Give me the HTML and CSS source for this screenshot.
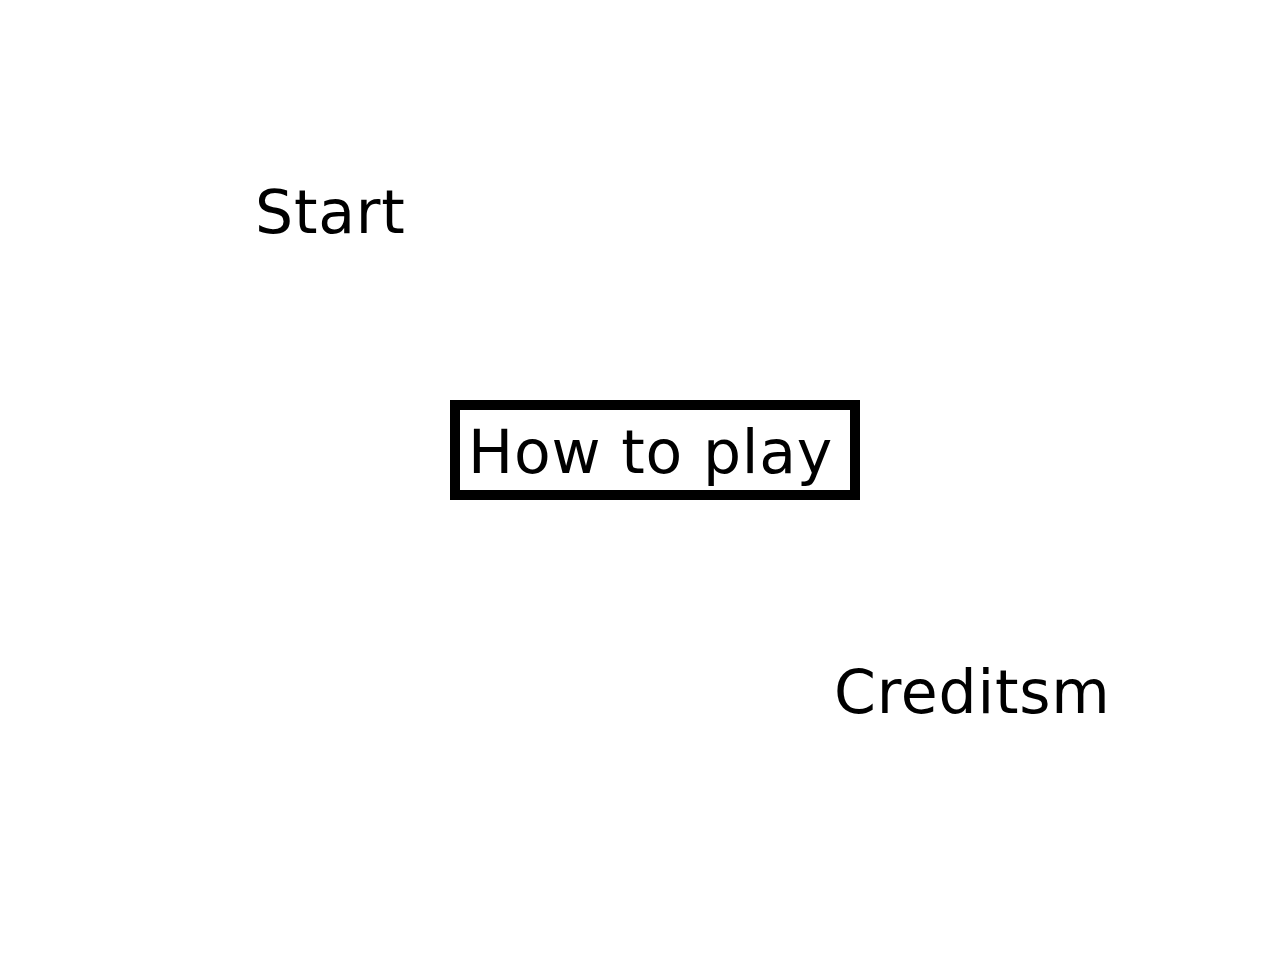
FILE: index.html
```html
<!DOCTYPE html>
<html>
<head>
<meta charset="utf-8">
<link rel="stylesheet" href="styles.css">
</head>
<body>
<main class="menu">
  <div class="item item-start">Start</div>
  <div class="item item-how"><span class="boxed">How to play</span></div>
  <div class="item item-credits">Creditsm</div>
</main>
</body>
</html>
```
FILE: styles.css
```css
html, body {
  margin: 0;
  padding: 0;
  background: #ffffff;
}
body {
  width: 1280px;
  height: 960px;
  overflow: hidden;
  font-family: "DejaVu Sans", sans-serif;
  font-size: 60px;
  letter-spacing: 0.8px;
  color: #000000;
}
.menu {
  display: flex;
  flex-direction: column;
  align-items: flex-start;
  padding-top: 177px;
}
.item {
  line-height: 70px;
  white-space: nowrap;
}
.item-start {
  padding-left: 255px;
}
.item-how {
  margin-top: 153px;
  padding-left: 450px;
}
.boxed {
  display: block;
  box-sizing: border-box;
  width: 410px;
  height: 100px;
  border: 10px solid #000000;
  padding: 7px 0 0 8px;
}
.item-credits {
  margin-top: 157px;
  padding-left: 834px;
}
```
